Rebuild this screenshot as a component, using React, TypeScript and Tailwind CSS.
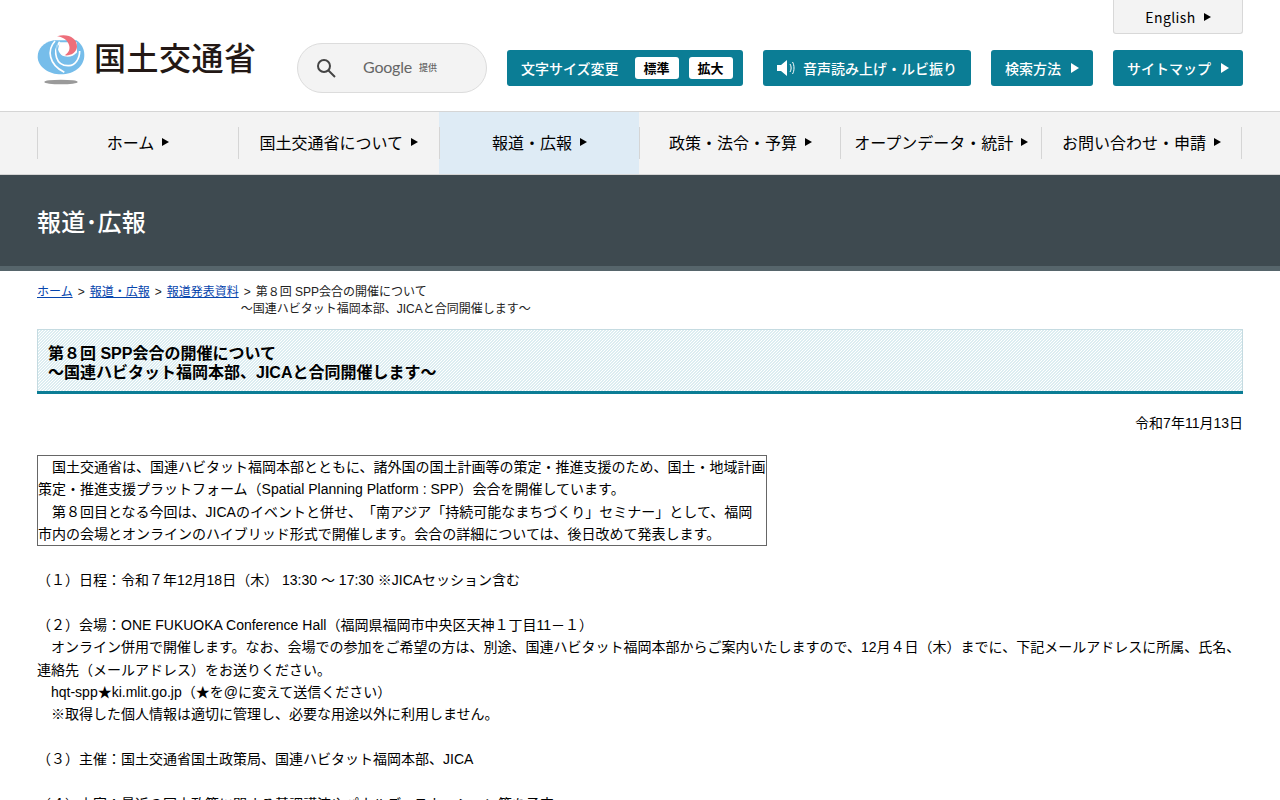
const jp = 'font-["Noto_Sans_CJK_JP","Noto_Sans",sans-serif]';

function Logo() {
  return (
    <svg width="48" height="52" viewBox="50 34 144 156" className="shrink-0">
      <path d="M100 56C70 62 52 82 52 105c0 30 33 53 70 53 38 0 70-23 70-58 0-18-9-34-24-44z" fill="#76bdea" />
      <path d="M104 58C80 85 84 128 132 152" fill="none" stroke="#ffffff" strokeWidth="5" />
      <path d="M118 60C96 90 106 134 146 132c18-1 32-20 32-44" fill="none" stroke="#ffffff" strokeWidth="5" />
      <path d="M118 62h52v30c-8 14-22 24-38 20-12-4-18-14-20-24z" fill="#ffffff" />
      <path d="M112 64c-12 24 3 54 28 54 15 0 26-10 30-26-10 12-25 16-38 12-14-4-22-19-20-40z" fill="#76bdea" />
      <path d="M110 44c30-10 62 4 60 32-2 18-20 27-37 25 13-8 18-20 12-34-6-14-20-21-35-23z" fill="#ee6f7b" />
      <ellipse cx="122" cy="181" rx="50" ry="7" fill="#9a9a9a" />
    </svg>
  );
}

function Tri({ size = 'md' }: { size?: 'sm' | 'md' }) {
  return size === 'sm' ? (
    <span className="ml-[8px] inline-block h-0 w-0 border-y-[4px] border-l-[7px] border-y-transparent border-l-black" />
  ) : (
    <span className="ml-[10px] inline-block h-0 w-0 border-y-[5px] border-l-[8px] border-y-transparent border-l-white" />
  );
}

const navItems = ['ホーム', '国土交通省について', '報道・広報', '政策・法令・予算', 'オープンデータ・統計', 'お問い合わせ・申請'];

export default function App() {
  return (
    <div className='h-screen overflow-hidden bg-white font-["Liberation_Sans","Noto_Sans_CJK_JP",sans-serif] text-[14px] text-black [text-spacing-trim:space-all]'>
      <header className="flex h-[111px] px-[37px]">
        <div className="flex w-[260px] items-start pt-[33px]">
          <Logo />
          <span className={`${jp} ml-[9px] mt-[1px] text-[32px] leading-[44px] font-medium tracking-[0.5px] whitespace-nowrap text-[#231815]`}>国土交通省</span>
        </div>
        <div className="mt-[43px] flex h-[50px] w-[190px] items-center rounded-[25px] border border-[#dcdcdc] bg-[#f3f3f3] pl-[18px] text-[#555]">
          <svg width="20" height="20" viewBox="0 0 20 20" fill="none" stroke="#444" strokeWidth="2">
            <circle cx="8" cy="8" r="6" />
            <path d="M12.5 12.5 L19 19" />
          </svg>
          <span className="ml-[27px] -mt-[3px] font-['Lato',sans-serif] text-[16px] tracking-[-0.2px] text-[#666]">Google</span>
          <span className={`${jp} ml-[7px] text-[9px] font-medium text-[#666]`}>提供</span>
        </div>
        <div className={`${jp} ml-auto flex flex-col items-end`}>
          <div className="flex h-[34px] w-[130px] items-center justify-center rounded-b-[3px] border border-t-0 border-[#d8d8d8] bg-[#f3f3f3] pt-[1px] text-[14px] tracking-[0.4px]">
            English<span className="ml-[8px] inline-block h-0 w-0 border-y-[4px] border-l-[7px] border-y-transparent border-l-black" />
          </div>
          <div className="mt-[16px] flex gap-[20px] text-[14px] font-medium text-white">
            <div className="flex h-[36px] w-[236px] items-center rounded-[3px] bg-[#0b7d95] pl-[14px]">
              <span>文字サイズ変更</span>
              <span className="ml-[16px] flex h-[22px] w-[44px] items-center justify-center rounded-[3px] bg-white text-[13px] font-bold text-black">標準</span>
              <span className="ml-[10px] flex h-[22px] w-[44px] items-center justify-center rounded-[3px] bg-white text-[13px] font-bold text-black">拡大</span>
            </div>
            <div className="flex h-[36px] w-[208px] items-center rounded-[3px] bg-[#0b7d95] pl-[13px]">
              <svg width="20" height="18" viewBox="0 0 20 18" fill="white" className="mr-[7px]">
                <path d="M1 6h4l6-5v16l-6-5H1z" />
                <path d="M14 5c1.500 2 1.500 6 0 8M16.500 3c2 3 2 9 0 12" fill="none" stroke="white" strokeWidth="1" />
              </svg>
              音声読み上げ・ルビ振り
            </div>
            <div className="flex h-[36px] w-[102px] items-center rounded-[3px] bg-[#0b7d95] pl-[14px]">
              検索方法<Tri />
            </div>
            <div className="flex h-[36px] w-[130px] items-center rounded-[3px] bg-[#0b7d95] pl-[14px]">
              サイトマップ<Tri />
            </div>
          </div>
        </div>
      </header>

      <nav className={`${jp} h-[64px] border-y border-[#d5d5d5] bg-[#f3f3f3] px-[37px]`}>
        <ul className="grid h-full w-[1205px] grid-cols-6">
          {navItems.map((item, i) => (
            <li key={item} className={`flex h-full items-center justify-center pb-[1px] ${i === 2 ? 'bg-[#deebf5]' : ''}`}>
              <span className={`flex h-[32px] w-full items-center justify-center border-l border-[#d5d5d5] pb-[1px] text-[16px] whitespace-nowrap ${i === 5 ? 'border-r' : ''}`}>
                {item}
                <Tri size="sm" />
              </span>
            </li>
          ))}
        </ul>
      </nav>

      <div className="flex h-[96px] items-start border-b-[5px] border-[#56656b] bg-[#3e4a50] px-[37px]">
        <span className={`${jp} mt-[28px] text-[24px] leading-[36px] font-medium tracking-[0.2px] text-white`}>報道･広報</span>
      </div>

      <main className="px-[37px]">
        <div className="mt-[13px] flex text-[12px] leading-[17px] text-[#222]">
          <a className="text-[#0645ad] underline">ホーム</a>
          <span className="mx-[5px]">&gt;</span>
          <a className="text-[#0645ad] underline">報道・広報</a>
          <span className="mx-[5px]">&gt;</span>
          <a className="text-[#0645ad] underline">報道発表資料</a>
          <span className="mx-[5px]">&gt;</span>
          <span>
            第８回 SPP会合の開催について
            <br />
            <span className="-ml-[15px]">～国連ハビタット福岡本部、JICAと合同開催します～</span>
          </span>
        </div>

        <h1 className="mt-[11px] h-[62px] border border-b-0 border-[#c5dbe1] bg-[repeating-linear-gradient(135deg,#dcedf1_0,#dcedf1_1.41px,#ffffff_1.41px,#ffffff_2.12px)] pt-[14px] pl-[10px] text-[16px] leading-[19px] font-bold">
          第８回 SPP会合の開催について
          <br />
          ～国連ハビタット福岡本部、JICAと合同開催します～
        </h1>
        <div className="h-[3px] bg-[#0b7d95]" />

        <p className="mt-[19px] text-right leading-[20px]">令和7年11月13日</p>

        <div className="mt-[22px] h-[91px] w-[730px] border border-[#666] leading-[22.4px]">
          <p>　国土交通省は、国連ハビタット福岡本部とともに、諸外国の国土計画等の策定・推進支援のため、国土・地域計画策定・推進支援プラットフォーム（Spatial Planning Platform : SPP）会合を開催しています。</p>
          <p>　第８回目となる今回は、JICAのイベントと併せ、「南アジア「持続可能なまちづくり」セミナー」として、福岡市内の会場とオンラインのハイブリッド形式で開催します。会合の詳細については、後日改めて発表します。</p>
        </div>

        <div className="mt-[23px] leading-[22.4px]">
          <p>（１）日程：令和７年12月18日（木） 13:30 ～ 17:30 ※JICAセッション含む</p>
          <p>&nbsp;</p>
          <p>（２）会場：ONE FUKUOKA Conference Hall（福岡県福岡市中央区天神１丁目11－１）</p>
          <p>　オンライン併用で開催します。なお、会場での参加をご希望の方は、別途、国連ハビタット福岡本部からご案内いたしますので、12月４日（木）までに、下記メールアドレスに所属、氏名、連絡先（メールアドレス）をお送りください。</p>
          <p>　hqt-spp★ki.mlit.go.jp（★を@に変えて送信ください）</p>
          <p>　※取得した個人情報は適切に管理し、必要な用途以外に利用しません。</p>
          <p>&nbsp;</p>
          <p>（３）主催：国土交通省国土政策局、国連ハビタット福岡本部、JICA</p>
          <p>&nbsp;</p>
          <p>（４）内容：最近の国土政策に関する基調講演やパネルディスカッション等を予定</p>
        </div>
      </main>
    </div>
  );
}
